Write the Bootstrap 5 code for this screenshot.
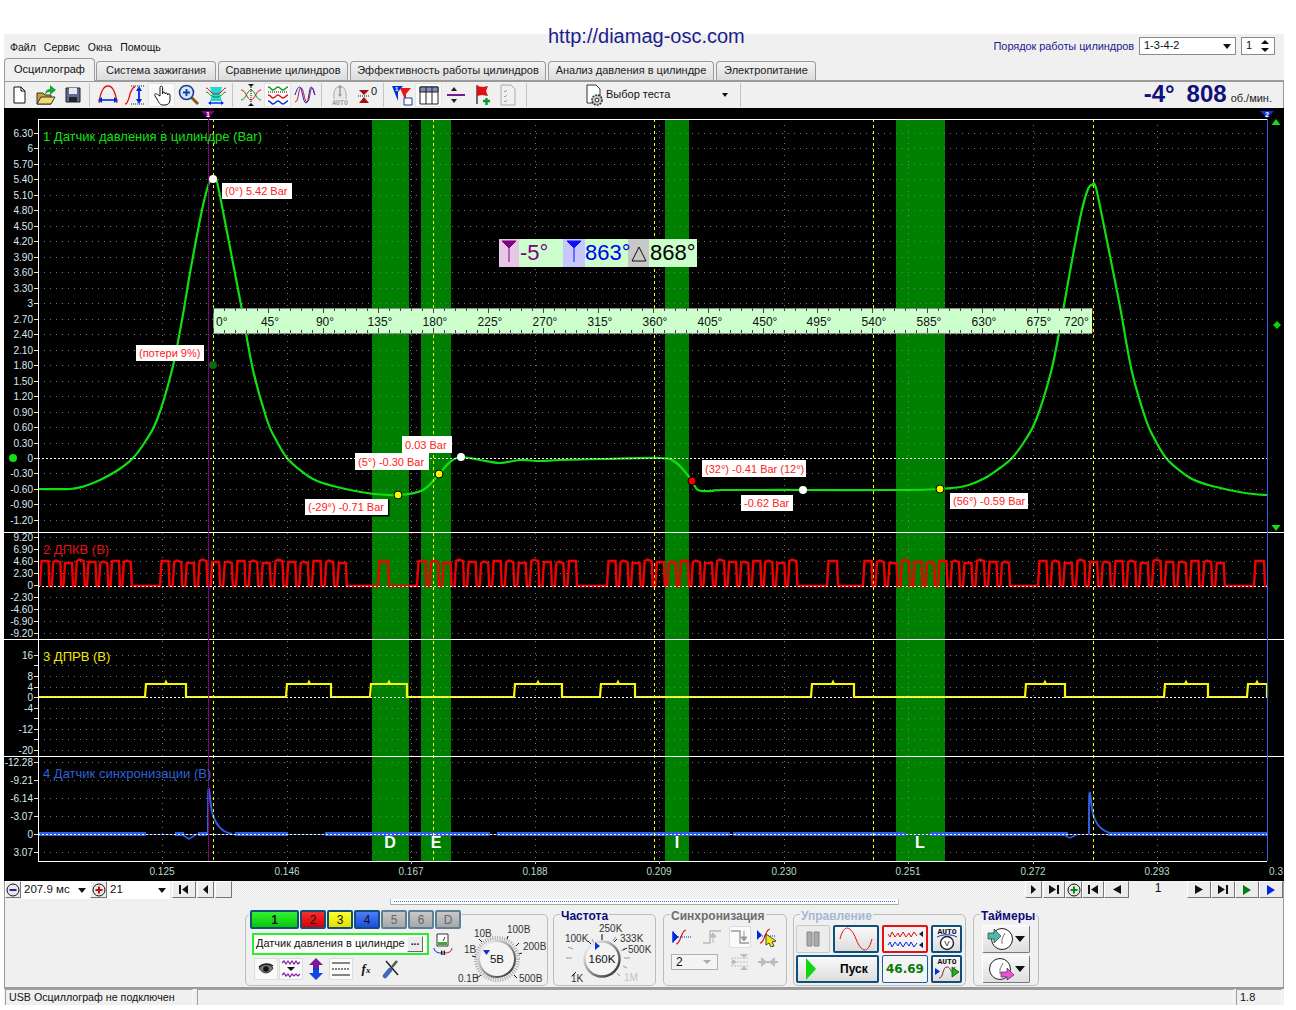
<!DOCTYPE html>
<html lang="ru">
<head>
  <meta charset="UTF-8" />
  <title>Осциллограф</title>
  <link href="https://cdn.jsdelivr.net/npm/bootstrap@5.3.0/dist/css/bootstrap.min.css" rel="stylesheet" />
  <style>
    body { margin: 0; padding-top: 34px; background: #fff; font-family: "Liberation Sans", Arial, sans-serif; font-size: 11px; color: #111; line-height: 1.2; }
    .site-url { position: absolute; left: 548px; top: 24px; font-size: 20px; color: #1c1c8e; line-height: 24px; }
    .app { width: 1280px; margin-left: 4px; background: #f0f0f0; height: 971px; }
    .menu-row { height: 24px; padding: 7px 0 0 6px; }
    .menu-row span.mi { margin-right: 8px; font-size: 10.5px; }
    .order-lbl { color: #1c1c8e; margin-right: 5px; letter-spacing: -.08px; margin-top: -1px; }
    .cmb { background: #fff; border: 1px solid #8a8a8a; height: 18px; display: flex; align-items: center; justify-content: space-between; padding: 0 4px; color: #111; margin-top: -4px; }
    .cmb i { width: 0; height: 0; border: 4px solid transparent; border-top: 5px solid #111; border-bottom: 0; }
    .order-cmb { width: 97px; }
    .spin { width: 34px; margin-left: 5px; margin-right: 9px; }
    .spin b { font-weight: 400; }
    .spin svg { display: block; }
    .tabs-row { height: 22px; padding-left: 0; border-bottom: 0; gap: 2px; flex-wrap: nowrap; }
    .tabs-row .nav-link { height: 19px; margin-top: 3px; padding: 2px 0 0; text-align: center; font-size: 11px; line-height: 13px; color: #222; border: 1px solid #9a9a9a; border-bottom: 0; border-radius: 4px 4px 0 0; background: linear-gradient(#f4f4f4, #dcdcdc); white-space: nowrap; }
    .tabs-row .nav-link.active { height: 23px; margin-top: 0; padding: 4px 0 0; margin-bottom: -1px; background: #f0f0f0; border-color: #9a9a9a; color: #111; position: relative; z-index: 2; }
    .tabs-row .nav-item:nth-child(1) { width: 91px; margin-right: -1px; }
    .tabs-row .nav-item:nth-child(2) { width: 120px; }
    .tabs-row .nav-item:nth-child(3) { width: 130px; }
    .tabs-row .nav-item:nth-child(4) { width: 196px; }
    .tabs-row .nav-item:nth-child(5) { width: 166px; }
    .tabs-row .nav-item:nth-child(6) { width: 100px; }
    .tool-row { height: 28px; border: 1px solid #9a9a9a; border-bottom: 0; border-top-width: 2px; padding-left: 0; margin-bottom: 0; align-items: center; }
    .tbtn { width: 27px; height: 24px; display: flex; align-items: center; justify-content: center; flex: none; }
    .tbtn.on { background: #fafafa; box-shadow: inset 0 0 0 1px #e4e4e4; }
    .tsep { width: 1px; height: 24px; background: #c4c4c4; margin: 0 4px 0 3px; flex: none; }
    .test-pick { width: 206px; height: 24px; display: flex; align-items: center; padding-left: 51px; flex: none; position: relative; }
    .test-pick i { position: absolute; right: 9px; top: 10px; border: 3px solid transparent; border-top: 4px solid #111; border-bottom: 0; }
    .rpm { margin-left: auto; color: #10107c; font-weight: 700; font-size: 24px; line-height: 26px; padding: 2px 11px 0 0; white-space: nowrap; display: flex; align-items: baseline; }
    .rpm small { font-size: 11px; font-weight: 400; color: #222; margin-left: 4px; }
    .rpm span { margin-right: 12px; }
    .scope-svg { display: block; background: #000; width: 1280px; height: 773px; font-family: "Liberation Sans", Arial, sans-serif; }
    .scroll-row { height: 18px; border-left: 1px solid #9a9a9a; border-right: 1px solid #9a9a9a; background: #f0f0f0; }
    .sbtn { height: 17px; flex: none; display: flex; align-items: center; justify-content: center; background: #ececec; border: 1px solid; border-color: #fff #777 #777 #fff; padding: 0; }
    .sfld { background: #fff; height: 18px; display: flex; align-items: center; justify-content: space-between; padding: 0 4px 0 3px; font-size: 11.5px; flex: none; }
    .sfld i { width: 0; height: 0; border: 4px solid transparent; border-top: 5px solid #111; border-bottom: 0; }
    .track { flex: 1; height: 17px; background: repeating-conic-gradient(#e6e6e6 0 25%, #fafafa 0 50%) 0 0 / 2px 2px; }
    .pageno { width: 58px; text-align: center; font-size: 12px; flex: none; }
    .slide-bar { margin: 0 0 5px 385px; width: 509px; height: 6px; background: #fff; border: 1px solid #bbb; border-top: 0; border-bottom: 1px solid #aaa; position: relative; }
    .slide-bar::before { content: ""; position: absolute; left: 3px; right: 3px; top: 2px; border-top: 1px dotted #3a6fd8; }
    .lower { height: 90px; border-left: 1px solid #9a9a9a; border-right: 1px solid #9a9a9a; border-bottom: 2px solid #9a9a9a; }
    .grp-row { padding-left: 240px; }
    .grp-box { height: 76px; border: 1px solid #bdbdbd; border-radius: 5px; padding: 4px 0 0 0; margin: 0; min-width: 0; flex: none; position: relative; }
    .grp-box legend { float: none; width: auto; height: 8px; line-height: 12px; margin: 0 0 0 6px; padding: 0 1px; font-size: 12px; font-weight: 700; white-space: nowrap; }
    .grp-chan { width: 303px; }
    .grp-chan legend { display: flex; gap: 1px; margin-left: 3px; }
    .grp-freq { width: 103px; margin-left: 5px; }
    .grp-sync { width: 124px; margin-left: 7px; }
    .grp-ctl { width: 173px; margin-left: 6px; }
    .grp-tim { width: 66px; margin-left: 7px; }
    .ttl-navy { color: #0c0c78; }
    .ttl-gray { color: #6e6e6e; }
    .ttl-pale { color: #a4b8d0; }
    .chan { height: 19px; padding: 0; border-radius: 2px; border: 2px solid #0f4f7c; font-size: 12px; line-height: 14px; color: #111; }
    .chan.g1 { background: linear-gradient(#35f035, #06c806); width: 49px; font-weight: 700; }
    .chan.g2 { background: linear-gradient(#f53030, #d80000); width: 26px; }
    .chan.g3 { background: linear-gradient(#ffff30, #e0e000); width: 26px; }
    .chan.g4 { background: linear-gradient(#4f7cf8, #1c4ee0); width: 26px; }
    .chan.g5 { background: linear-gradient(#c8c8c8, #a8a8a8); width: 26px; color: #666; border-color: #5e7e94; }
    .chan-left { width: 208px; padding: 11px 0 0 6px; }
    .name-fld { width: 177px; height: 22px; border: 2px solid #2bee2b; background: #fff; font-size: 11px; display: flex; align-items: center; justify-content: space-between; padding-left: 2px; white-space: nowrap; }
    .dots-btn { width: 16px; height: 16px; background: #ececec; border: 1px solid; border-color: #fff #666 #666 #fff; font-size: 10px; line-height: 10px; text-align: center; font-weight: 700; }
    .ibtn-row { gap: 1px; margin: 3px 0 0 2px; }
    .ibtn { width: 24px; height: 22px; display: flex; align-items: center; justify-content: center; flex: none; }
    .ibtn.on { background: #fafafa; box-shadow: inset 0 0 0 1px #ddd; }
    .fx-lbl { font-family: "Liberation Serif", serif; font-style: italic; font-weight: 700; font-size: 13px; }
    .fx-lbl small { font-size: 9px; }
    .sync-a { gap: 5px; padding: 4px 0 0 7px; }
    .sync-b { gap: 8px; padding: 5px 0 0 7px; }
    .sync-off { box-shadow: none; background: #fafafa; width: 22px; }
    .ctl-row { gap: 3px; padding: 3px 0 0 2px; }
    .ctl-row + .ctl-row { padding-top: 2px; }
    .ctl { border: 2px solid #0f4f7c; border-radius: 2px; background: linear-gradient(#fafafa, #dcdcdc); display: flex; align-items: center; justify-content: center; height: 28px; flex: none; padding: 0; }
    .ctl.pale { border-color: #c8c8c8; background: #ececec; border-width: 1px; width: 34px; }
    .ctl.wide { width: 46px; }
    .ctl.narrow { width: 31px; }
    .ctl.go { width: 83px; justify-content: flex-start; }
    .ctl.red { border-color: #e81010; background: #f4f4f4; }
    .ctl.flat { background: #f4f4f4; border-color: #1a5ea0; border-width: 1px; color: #0a7a0a; font-weight: 700; font-size: 12px; font-family: "DejaVu Sans", sans-serif; }
    .ctl.timer { border: 1px solid; border-color: #fff #777 #777 #fff; background: linear-gradient(#f8f8f8, #dedede); width: 48px; justify-content: space-between; padding: 0 4px 0 4px; }
    .tim-col { gap: 2px; padding-top: 3px; }
    .go-lbl { font-weight: 700; font-size: 12px; margin-left: 24px; }
    .sync-cmb { width: 47px; height: 16px; background: #f4f4f4; border: 1px solid #b0b0b0; display: flex; align-items: center; justify-content: space-between; padding: 0 6px 0 4px; font-size: 12px; }
    .sync-cmb i { border: 4px solid transparent; border-top: 4px solid #aaa; border-bottom: 0; }
    .status-row { height: 17px; padding-left: 1px; }
    .st-cell { border: 1px solid; border-color: #a0a0a0 #f8f8f8 #f8f8f8 #a0a0a0; height: 17px; padding: 1px 0 0 3px; background: #f0f0f0; }
    .st-a { width: 188px; font-size: 10.7px; }
    .st-b { width: 1037px; margin-left: 4px; }
    .st-c { width: 46px; margin-left: 2px; }
    .knob-lbl { font-size: 10px; fill: #333; font-family: "Liberation Sans", Arial, sans-serif; }
    .knob-val { font-size: 11.5px; fill: #111; font-family: "Liberation Sans", Arial, sans-serif; }
    .sb-16 { width: 16px; } .sb-17 { width: 17px; } .sb-22 { width: 22px; } .sb-24 { width: 24px; } .sb-25 { width: 25px; }
    .sf-69 { width: 69px; } .sf-63 { width: 63px; margin-right: 2px; }
    .ml-1px { margin-left: 1px; }
  </style>
</head>
<body>
  <div class="site-url">http://diamag-osc.com</div>

  <div class="app">
    <!-- menu -->
    <div class="menu-row d-flex align-items-start">
      <span class="mi">Файл</span><span class="mi">Сервис</span><span class="mi">Окна</span><span class="mi">Помощь</span>
      <span class="order-lbl ms-auto">Порядок работы цилиндров</span>
      <div class="cmb order-cmb"><span>1-3-4-2</span><i></i></div>
      <div class="cmb spin"><b>1</b>
        <svg width="10" height="14" viewBox="0 0 10 14"><path d="M5 1 9 5H1zM5 13 9 9H1z" fill="#111"/></svg>
      </div>
    </div>

    <!-- tabs -->
    <ul class="nav nav-tabs tabs-row">
      <li class="nav-item"><a class="nav-link active" href="#">Осциллограф</a></li>
      <li class="nav-item"><a class="nav-link" href="#">Система зажигания</a></li>
      <li class="nav-item"><a class="nav-link" href="#">Сравнение цилиндров</a></li>
      <li class="nav-item"><a class="nav-link" href="#">Эффективность работы цилиндров</a></li>
      <li class="nav-item"><a class="nav-link" href="#">Анализ давления в цилиндре</a></li>
      <li class="nav-item"><a class="nav-link" href="#">Электропитание</a></li>
    </ul>

    <!-- toolbar -->
    <div class="tool-row d-flex">
      <div class="tbtn"><svg width="22" height="22" viewBox="0 0 22 22"><path d="M6 3h7l4 4v12H6z" fill="#fff" stroke="#111"/><path d="M13 3v4h4" fill="none" stroke="#111"/></svg></div>
      <div class="tbtn"><svg width="24" height="24" viewBox="0 0 24 24"><path d="M3 10h6l2 2h6v9H3z" fill="#c9a23a" stroke="#333"/><path d="M3 21l4-7h14l-4 7z" fill="#f4d870" stroke="#333"/><path d="M16 2l6 5-6 5V9c-3 0-4 1-5 3 0-4 2-6 5-6z" fill="#18a838"/></svg></div>
      <div class="tbtn"><svg width="20" height="20" viewBox="0 0 20 20"><path d="M3 3h14v14H3z" fill="#5a6a9a" stroke="#222"/><path d="M6 3h8v6H6z" fill="#e8e8e8"/><path d="M6 12h8v5H6z" fill="#222"/></svg></div>
      <div class="tsep"></div>
      <div class="tbtn"><svg width="24" height="24" viewBox="0 0 24 24"><path d="M3 20C5 5 9 3 12 3s7 2 9 17" fill="none" stroke="#e01010" stroke-width="1.300"/><path d="M4 17h16" stroke="#0028e0" stroke-width="1.600"/><path d="M2 17l4-3v6zM22 17l-4-3v6z" fill="#0028e0"/></svg></div>
      <div class="tbtn"><svg width="24" height="24" viewBox="0 0 24 24"><path d="M2 21c5 0 4-17 10-17" fill="none" stroke="#e01010" stroke-width="1.300"/><path d="M8 3h14M8 21h14" stroke="#222" stroke-dasharray="1 1"/><path d="M16 5v14" stroke="#0028e0" stroke-width="1.800"/><path d="M16 3l-3 5h6zM16 21l-3-5h6z" fill="#0028e0"/></svg></div>
      <div class="tbtn on"><svg width="22" height="24" viewBox="0 0 22 24"><path d="M9 13V4.500a1.300 1.300 0 0 1 2.600 0V11v-1a1.300 1.300 0 0 1 2.500 0v1a1.300 1.300 0 0 1 2.500 0v1a1.200 1.200 0 0 1 2.400 0v5c0 3-2 5-5 5h-2c-3 0-4-2-6-6l-2-3c-1-2 1-3 2.500-1.500z" fill="#fff" stroke="#111"/></svg></div>
      <div class="tbtn"><svg width="24" height="24" viewBox="0 0 24 24"><path d="M14 14l7 7" stroke="#8a5a18" stroke-width="3"/><circle cx="9.500" cy="9.500" r="7" fill="#cfe6fa" stroke="#223a88" stroke-width="1.600"/><path d="M6 9.500h7M9.500 6v7" stroke="#1c3aa0" stroke-width="1.800"/></svg></div>
      <div class="tbtn"><svg width="24" height="24" viewBox="0 0 24 24"><path d="M6 4h12l-2 8 2 6H6l2-6z" fill="#1fd8d8"/><path d="M2 5c3 0 4 6 10 6s7-6 10-6" fill="none" stroke="#e01010"/><path d="M2 9c3 0 4 5 10 5s7-5 10-5" fill="none" stroke="#0a9a0a"/><path d="M6 20h12" stroke="#0028e0" stroke-width="1.400"/><path d="M4 20l3-2v4zM20 20l-3-2v4z" fill="#0028e0"/></svg></div>
      <div class="tsep"></div>
      <div class="tbtn"><svg width="24" height="24" viewBox="0 0 24 24"><path d="M2 7c5 0 6 10 10 10s5-10 10-10" fill="none" stroke="#e01010"/><path d="M2 17c5 0 6-10 10-10s5 10 10 10" fill="none" stroke="#0a9a0a"/><path d="M12 4l-3-3h6zM12 20l-3 3h6z" fill="#111"/><path d="M12 4v16" stroke="#111" stroke-dasharray="1 1"/></svg></div>
      <div class="tbtn on"><svg width="24" height="24" viewBox="0 0 24 24"><path d="M2 4c3 0 3 3 5 3s3-3 5-3 3 3 5 3 3-3 5-3" fill="none" stroke="#0a9a0a" stroke-width="1.300"/><path d="M2 12c3 0 3 3 5 3s3-3 5-3 3 3 5 3 3-3 5-3" fill="none" stroke="#e01010" stroke-width="1.300"/><path d="M2 18c3 0 3 3 5 3s3-3 5-3 3 3 5 3 3-3 5-3" fill="none" stroke="#0028e0" stroke-width="1.300"/><path d="M2 9h20" stroke="#111" stroke-dasharray="1 1"/></svg></div>
      <div class="tbtn"><svg width="24" height="24" viewBox="0 0 24 24"><path d="M2 19C6 19 5 5 8 5s3 14 6 14 3-14 5-14 2 5 3 7" fill="none" stroke="#e01010"/><path d="M2 12c2-6 3-8 5-8s3 16 6 16 3-16 5-16 2 4 4 8" fill="none" stroke="#0028e0"/></svg></div>
      <div class="tsep"></div>
      <div class="tbtn"><svg width="24" height="24" viewBox="0 0 24 24"><path d="M6 16C5 8 8 3 12 3s7 5 6 13" fill="#e8e8e8" stroke="#aaa"/><path d="M12 4v9" stroke="#999" stroke-width="1.400"/><path d="M12 2l-2 3h4zM12 14l-2-3h4z" fill="#999"/><text x="12" y="22" text-anchor="middle" font-size="6.500" font-weight="700" fill="#999" font-family="Liberation Mono">AUTO</text></svg></div>
      <div class="tbtn"><svg width="24" height="24" viewBox="0 0 24 24"><path d="M3 13h12" stroke="#111" stroke-dasharray="1 1"/><path d="M9 12l-5-5h10zM9 14l-5 6h10z" fill="#a01010"/><text x="19" y="12" text-anchor="middle" font-size="11" fill="#111" font-family="Liberation Sans">0</text></svg></div>
      <div class="tsep"></div>
      <div class="tbtn"><svg width="24" height="24" viewBox="0 0 24 24"><path d="M2 3h11l-5 6v9z" fill="#0030d8"/><path d="M10 5h11l-5 6v8z" fill="#e81818"/><path d="M14 15h8v7h-8z" fill="#fff" stroke="#103a9a"/><text x="5" y="8" font-size="6" font-weight="700" fill="#fff" font-family="Liberation Sans">1</text></svg></div>
      <div class="tbtn on"><svg width="22" height="22" viewBox="0 0 22 22"><path d="M2 3h18v17H2z" fill="#fff" stroke="#222"/><path d="M2 3h18v5H2z" fill="#7d8fb8" stroke="#222"/><path d="M8 3v17M14 3v17" stroke="#222"/></svg></div>
      <div class="tbtn"><svg width="24" height="24" viewBox="0 0 24 24"><path d="M3 12h18" stroke="#7a1a90" stroke-width="2"/><path d="M10 4l-3 4h6zM10 20l-3-4h6z" fill="#222"/></svg></div>
      <div class="tbtn"><svg width="22" height="24" viewBox="0 0 22 24"><path d="M5 2v19" stroke="#333" stroke-width="1.400"/><path d="M5 3l6 1 5-1-2 5 2 5-6-1-5 1z" fill="#e01010"/><path d="M11 18h7M14.500 15v7" stroke="#0a9a2a" stroke-width="2.400"/></svg></div>
      <div class="tbtn"><svg width="20" height="22" viewBox="0 0 20 22"><path d="M1 1h10l4 4v16H1z" fill="#f0f0f0" stroke="#aaa"/><path d="M4 7l1 1 2-2M4 12l1 1 2-2M4 17l1 1 2-2" fill="none" stroke="#a0a0a0"/></svg></div>
      <div class="tsep"></div>
      <div class="test-pick">
        <svg width="24" height="24" viewBox="0 0 24 24"><path d="M5 2h9l4 4v14H5z" fill="#fff" stroke="#333"/><circle cx="15" cy="17" r="5" fill="#c8c8c8" stroke="#333" stroke-dasharray="2 1" stroke-width="1.600"/><circle cx="15" cy="17" r="1.800" fill="#fff" stroke="#333"/></svg>
        <span>Выбор теста</span><i></i>
      </div>
      <div class="tsep"></div>
      <div class="rpm"><span>-4°</span>808<small>об./мин.</small></div>
    </div>

    <svg id="scope" class="scope-svg" viewBox="0 0 1280 773"></svg>

    <!-- scroll row -->
    <div class="scroll-row d-flex">
      <button class="sbtn sb-16"><svg width="14" height="14" viewBox="0 0 14 14"><circle cx="7" cy="7" r="6" fill="#e8e8e8" stroke="#111"/><path d="M3.500 7h7" stroke="#1a2a9a" stroke-width="2"/></svg></button>
      <div class="sfld sf-69"><span>207.9 мс</span><i></i></div>
      <button class="sbtn sb-17"><svg width="14" height="14" viewBox="0 0 14 14"><circle cx="7" cy="7" r="6" fill="#e8e8e8" stroke="#111"/><path d="M3.500 7h7M7 3.500v7" stroke="#c01010" stroke-width="2"/></svg></button>
      <div class="sfld sf-63"><span>21</span><i></i></div>
      <button class="sbtn sb-24"><svg width="10" height="9" viewBox="0 0 10 9"><path d="M0 0h2v9H0zM9 0v9L3 4.500z" fill="#111"/></svg></button>
      <button class="sbtn sb-17 ml-1px"><svg width="5" height="9" viewBox="0 0 5 9"><path d="M5 0v9L0 4.500z" fill="#111"/></svg></button>
      <button class="sbtn sb-17 ml-1px"></button>
      <div class="track"></div>
      <button class="sbtn sb-17"><svg width="5" height="9" viewBox="0 0 5 9"><path d="M0 0v9l5-4.500z" fill="#111"/></svg></button>
      <button class="sbtn sb-22 ml-1px"><svg width="10" height="9" viewBox="0 0 10 9"><path d="M0 0v9l7-4.500zM8 0h2v9H8z" fill="#111"/></svg></button>
      <button class="sbtn sb-17"><svg width="14" height="14" viewBox="0 0 14 14"><circle cx="7" cy="7" r="6" fill="#e8e8e8" stroke="#111"/><path d="M3.500 7h7M7 3.500v7" stroke="#0a8a1a" stroke-width="2"/></svg></button>
      <button class="sbtn sb-22"><svg width="10" height="9" viewBox="0 0 10 9"><path d="M0 0h2v9H0zM10 0v9L3 4.500z" fill="#111"/></svg></button>
      <button class="sbtn sb-25"><svg width="8" height="9" viewBox="0 0 8 9"><path d="M8 0v9L0 4.500z" fill="#111"/></svg></button>
      <div class="pageno">1</div>
      <button class="sbtn sb-24"><svg width="8" height="9" viewBox="0 0 8 9"><path d="M0 0v9l8-4.500z" fill="#111"/></svg></button>
      <button class="sbtn sb-24"><svg width="10" height="9" viewBox="0 0 10 9"><path d="M0 0v9l7-4.500zM8 0h2v9H8z" fill="#111"/></svg></button>
      <button class="sbtn sb-24"><svg width="8" height="10" viewBox="0 0 8 10"><path d="M0 0v10l8-5z" fill="#0a7a0a"/></svg></button>
      <button class="sbtn sb-24"><svg width="8" height="10" viewBox="0 0 8 10"><path d="M0 0v10l8-5z" fill="#0028e0"/></svg></button>
    </div>

    <!-- lower control panel -->
    <div class="lower">
      <div class="slide-bar"></div>
      <div class="d-flex grp-row">

        <fieldset class="grp-box grp-chan">
          <legend>
            <button class="chan g1">1</button><button class="chan g2">2</button><button class="chan g3">3</button><button class="chan g4">4</button><button class="chan g5">5</button><button class="chan g5">6</button><button class="chan g5">D</button>
          </legend>
          <div class="d-flex">
            <div class="chan-left">
              <div class="d-flex align-items-center">
                <div class="name-fld"><span>Датчик давления в цилиндре</span><div class="dots-btn me-1">...</div></div>
                <svg class="ms-1" width="20" height="22" viewBox="0 0 20 22"><path d="M4 1h11v12H4z" fill="#fff" stroke="#333"/><path d="M5 9h9v3H5z" fill="#38a838"/><path d="M10 8l2-4" stroke="#333"/><path d="M1 15c0 3 3 5 7 5" fill="none" stroke="#0028e0"/><path d="M19 15c0 3-3 5-7 5" fill="none" stroke="#e01010"/><path d="M8 17v6l3-3zM12 17v6l-3-3z" fill="#222"/></svg>
              </div>
              <div class="d-flex ibtn-row">
                <div class="ibtn on"><svg width="16" height="12" viewBox="0 0 16 12"><path d="M1 5c3-4 10-5 14 0-3 6-10 7-14 0z" fill="#777" stroke="#333"/><circle cx="8" cy="6" r="2.800" fill="#111"/><path d="M1 4c4-4 10-4 14-1" fill="none" stroke="#111" stroke-width="1.400"/></svg></div>
                <div class="ibtn on"><svg width="20" height="22" viewBox="0 0 20 22"><path d="M1 5l2-2 2 3 2-3 2 3 2-3 2 3 2-3 2 3 2-2M1 17l2-2 2 3 2-2 2 3 2-3 2 2 2-2 2 2 2-2" fill="none" stroke="#8a1aa0" stroke-width="1.200"/><path d="M6 9h8l-4 4z" fill="#111"/></svg></div>
                <div class="ibtn"><svg width="18" height="24" viewBox="0 0 18 24"><path d="M9 1 2 8h4v5h6V8h4z" fill="#7a1a9a"/><path d="M9 23l7-7h-4v-5H6v5H2z" fill="#0a3ae0" opacity=".95"/></svg></div>
                <div class="ibtn on"><svg width="20" height="18" viewBox="0 0 20 18"><path d="M1 3h18M1 15h18" stroke="#111"/><path d="M1 9h18" stroke="#111" stroke-dasharray="2 1"/></svg></div>
                <div class="ibtn"><span class="fx-lbl">f<small>x</small></span></div>
                <div class="ibtn"><svg width="18" height="20" viewBox="0 0 18 20"><path d="M3 17l5-6" stroke="#3a6ab8" stroke-width="4.500" stroke-linecap="round"/><path d="M4 2l12 14" stroke="#222" stroke-width="1.500"/><path d="M15 2l-5 6" stroke="#555" stroke-width="2.500"/></svg></div>
              </div>
            </div>
            <svg width="92" height="64" viewBox="454 921 92 64">
              <defs>
                <linearGradient id="ringV" x1="0" y1="0" x2="1" y2="1"><stop offset=".1" stop-color="#f2f2f2"/><stop offset="1" stop-color="#222"/></linearGradient>
                <linearGradient id="ringF" x1="0" y1="0" x2="1" y2="1"><stop offset=".1" stop-color="#f2f2f2"/><stop offset="1" stop-color="#222"/></linearGradient>
              </defs>
              <circle cx="497" cy="958" r="21" fill="none" stroke="#aaa" stroke-width="4" stroke-dasharray="1 1.400"/>
              <circle cx="497" cy="958" r="18" fill="#f4f4f4" stroke="url(#ringV)" stroke-width="2"/>
              <path d="M481 974l-4 3M482 941l-3-3M507 938l1-3M516 945l3-3M519 953l3-1M514 974l3 3M472 955l4 1" stroke="#111"/>
              <path d="M483 949h7l-3.500 5z" fill="#1030d8"/>
              <text class="knob-val" x="497" y="962" text-anchor="middle">5В</text>
              <text class="knob-lbl" x="474" y="936">10В</text>
              <text class="knob-lbl" x="507" y="932">100В</text>
              <text class="knob-lbl" x="523" y="949">200В</text>
              <text class="knob-lbl" x="464" y="952">1В</text>
              <text class="knob-lbl" x="458" y="981">0.1В</text>
              <text class="knob-lbl" x="519" y="981">500В</text>
            </svg>
          </div>
        </fieldset>

        <fieldset class="grp-box grp-freq">
          <legend class="ttl-navy">Частота</legend>
          <svg width="101" height="64" viewBox="554 921 101 64" class="d-block">
            <path d="M566 957h6M568 946l5 2M571 976l4-3M592 938l2 4M602 934v5M616 936l-3 4M625 947l-4 3M630 957h-6M627 967l-4-2M620 975l-3-3" stroke="#999"/>
            <path d="M572 975l4-4M588 940l3 3M602 933v6M617 938l-3 3M627 947l-4 2" stroke="#222"/>
            <circle cx="602" cy="958" r="17.500" fill="#f4f4f4" stroke="url(#ringF)" stroke-width="2.400"/>
            <path d="M595 941v8l5-4z" fill="#1030d8"/>
            <text class="knob-val" x="602" y="962" text-anchor="middle">160K</text>
            <text class="knob-lbl" x="599" y="931">250K</text>
            <text class="knob-lbl" x="565" y="941">100K</text>
            <text class="knob-lbl" x="620" y="941">333K</text>
            <text class="knob-lbl" x="628" y="952">500K</text>
            <text class="knob-lbl" x="571" y="981">1K</text>
            <text class="knob-lbl" x="624" y="980" style="fill:#c4c4c4">1M</text>
          </svg>
        </fieldset>

        <fieldset class="grp-box grp-sync">
          <legend class="ttl-gray">Синхронизация</legend>
          <div class="d-flex align-items-center sync-a">
            <div class="ibtn"><svg width="22" height="18" viewBox="0 0 22 18"><path d="M4 16c5 0 5-14 10-14" fill="none" stroke="#e01010" stroke-width="1.200"/><path d="M4 9h16" stroke="#0028e0" stroke-dasharray="1 1"/><path d="M1 3v12M1 4l5 5-5 5z" fill="#0028e0" stroke="#0028e0"/></svg></div>
            <div class="ibtn"><svg width="20" height="16" viewBox="0 0 20 16"><path d="M1 14h7V2h11" fill="none" stroke="#b8b8b8" stroke-width="1.400"/><path d="M11 14V6M11 4l-3 4h6z" stroke="#b8b8b8" fill="#b8b8b8"/></svg></div>
            <div class="ibtn on sync-off"><svg width="20" height="16" viewBox="0 0 20 16"><path d="M1 2h9v12h9" fill="none" stroke="#999" stroke-width="1.400"/><path d="M14 2v8M14 12l-3-4h6z" stroke="#999" fill="#999"/></svg></div>
            <div class="ibtn"><svg width="24" height="20" viewBox="0 0 24 20"><path d="M4 16c5 0 5-14 10-14" fill="none" stroke="#e01010" stroke-width="1.200"/><path d="M4 9h16" stroke="#0028e0" stroke-dasharray="1 1"/><path d="M1 3v10l5-5z" fill="#0028e0"/><path d="M10 7l10 7-4 1 2 4-3 1-2-4-3 2z" fill="#f4e410" stroke="#222" stroke-width=".8"/></svg></div>
          </div>
          <div class="d-flex align-items-center sync-b">
            <div class="sync-cmb"><span>2</span><i></i></div>
            <svg class="ms-1" width="20" height="18" viewBox="0 0 20 18"><path d="M2 6v6l5-3z" fill="#bbb"/><path d="M1 5h18M1 13h18M1 9h18" stroke="#bbb" stroke-dasharray="2 1"/><path d="M14 5l-4-4h8zM14 13l-4 4h8z" fill="#bbb"/></svg>
            <svg width="20" height="12" viewBox="0 0 20 12"><path d="M0 6h20" stroke="#bbb" stroke-width="2"/><path d="M3 1l6 5-6 5zM17 1l-6 5 6 5z" fill="#bbb"/></svg>
          </div>
        </fieldset>

        <fieldset class="grp-box grp-ctl">
          <legend class="ttl-pale">Управление</legend>
          <div class="d-flex ctl-row">
            <button class="ctl pale"><svg width="14" height="16" viewBox="0 0 14 16"><path d="M1 1h5v14H1zM8 1h5v14H8z" fill="#aaa" stroke="#888"/></svg></button>
            <button class="ctl wide"><svg width="34" height="24" viewBox="0 0 34 24"><path d="M1 12C5-4 12-1 17 12s12 16 16 0" fill="none" stroke="#e01010"/></svg></button>
            <button class="ctl wide red"><svg width="38" height="24" viewBox="0 0 38 24"><path d="M2 7l2 3 2-5 3 5 3-4 2 4 3-5 3 5 3-4 2 4 3-5 3 4" fill="none" stroke="#e01010"/><path d="M2 18l2-3 2 5 3-5 3 4 2-4 3 5 3-5 3 4 2-4 3 5 3-4" fill="none" stroke="#0028e0"/><path d="M37 4v6l-4-3zM37 15v6l-4-3z" fill="#123"/></svg></button>
            <button class="ctl narrow"><svg width="26" height="24" viewBox="0 0 26 24"><text x="13" y="7" text-anchor="middle" font-size="8" font-weight="700" fill="#111" font-family="Liberation Mono">AUTO</text><path d="M3 10c6-3 14-3 20 0" fill="none" stroke="#0028e0"/><circle cx="13" cy="16" r="6.500" fill="#fff" stroke="#222" stroke-width="1.400"/><text x="13" y="19" text-anchor="middle" font-size="8" fill="#111" font-family="Liberation Sans">V</text></svg></button>
          </div>
          <div class="d-flex ctl-row">
            <button class="ctl go"><svg class="ms-2" width="10" height="22" viewBox="0 0 10 22"><path d="M0 0v22l10-11z" fill="#10d810"/></svg><span class="go-lbl">Пуск</span></button>
            <button class="ctl wide flat">46.69</button>
            <button class="ctl narrow"><svg width="26" height="24" viewBox="0 0 26 24"><text x="13" y="7" text-anchor="middle" font-size="8" font-weight="700" fill="#111" font-family="Liberation Mono">AUTO</text><path d="M5 21c5 0 3-11 8-11s3 11 8 0" fill="none" stroke="#8a1a1a"/><path d="M1 11v7l5-3.500z" fill="#0028e0"/><path d="M18 10v10l7-5z" fill="#10c010" stroke="#111" stroke-width=".6"/></svg></button>
          </div>
        </fieldset>

        <fieldset class="grp-box grp-tim">
          <legend class="ttl-navy">Таймеры</legend>
          <div class="d-flex flex-column align-items-center tim-col">
            <button class="ctl timer"><svg width="28" height="24" viewBox="0 0 28 24"><circle cx="15" cy="12" r="10.500" fill="#fff" stroke="#222"/><path d="M15 12l3-6M15 12v5" stroke="#777"/><path d="M1 6h6V2l7 7-7 7v-4H1z" fill="#50b8a8" stroke="#222" stroke-width=".6"/></svg><svg width="10" height="6" viewBox="0 0 10 6"><path d="M0 0h10L5 6z" fill="#111"/></svg></button>
            <button class="ctl timer"><svg width="28" height="24" viewBox="0 0 28 24"><circle cx="13" cy="12" r="10.500" fill="#fff" stroke="#222"/><path d="M13 12l3-6M13 12v5" stroke="#777"/><path d="M14 15h6v-4l7 7-7 5v-3h-6z" fill="#f050d8" stroke="#222" stroke-width=".6"/></svg><svg width="10" height="6" viewBox="0 0 10 6"><path d="M0 0h10L5 6z" fill="#111"/></svg></button>
          </div>
        </fieldset>
      </div>
    </div>

    <!-- status bar -->
    <div class="status-row d-flex">
      <div class="st-cell st-a">USB Осциллограф не подключен</div>
      <div class="st-cell st-b"></div>
      <div class="st-cell st-c">1.8</div>
    </div>
  </div>

<script>
  // everything in the scope is written in page coordinates, then shifted by (-4, -108)
  const parts = [];

  function txt(x, y, s, o = {}) {
    const a = o.anchor ? ` text-anchor="${o.anchor}"` : "";
    const b = o.bold ? ' font-weight="700"' : "";
    parts.push(`<text x="${x}" y="${y}" font-size="${o.size || 10}" fill="${o.fill || "#fff"}"${a}${b}>${s}</text>`);
  }
  function line(x1, y1, x2, y2, stroke, extra = "") {
    parts.push(`<path d="M${x1} ${y1}L${x2} ${y2}" stroke="${stroke}" shape-rendering="crispEdges" fill="none" ${extra}/>`);
  }
  function rect(x, y, w, h, fill, extra = "") {
    parts.push(`<rect x="${x}" y="${y}" width="${w}" height="${h}" fill="${fill}" ${extra}/>`);
  }
  function smooth(p) {
    let d = `M${p[0][0]} ${p[0][1]}`;
    for (let i = 0; i < p.length - 1; i++) {
      const a = p[Math.max(i - 1, 0)], b = p[i], c = p[i + 1], e = p[Math.min(i + 2, p.length - 1)];
      d += `C${(b[0] + (c[0] - a[0]) / 6).toFixed(1)} ${(b[1] + (c[1] - a[1]) / 6).toFixed(1)} ${(c[0] - (e[0] - b[0]) / 6).toFixed(1)} ${(c[1] - (e[1] - b[1]) / 6).toFixed(1)} ${c[0]} ${c[1]}`;
    }
    return d;
  }

  const L = 38, R = 1267, T = 119, B = 861;
  const GRID = 'stroke-dasharray="1 5"';

  function axisRow(y, s) {
    if (s !== "0") line(L, y, R, y, "#777", GRID);
    line(34, y, L, y, "#ddd");
    if (s) txt(33, y + 4, s, { anchor: "end", fill: "#dde8ec" });
  }

  // green bands
  [[372, 409], [421, 451], [665, 689], [896, 945]].forEach(b => rect(b[0], T, b[1] - b[0], B - T, "#008000"));

  // vertical grid
  [162, 287, 411, 535, 659, 784, 908, 1033, 1157].forEach(x => line(x, T, x, B, "#777", GRID));

  // axes
  ["6.30", "6", "5.70", "5.40", "5.10", "4.80", "4.50", "4.20", "3.90", "3.60", "3.30", "3", "2.70", "2.40", "2.10", "1.80", "1.50", "1.20", "0.90", "0.60", "0.30", "0", "-0.30", "-0.60", "-0.90", "-1.20"]
    .forEach((s, i) => axisRow(Math.round(132.7 + i * 15.49), s));
  ["9.20", "6.90", "4.60", "2.30", "0", "-2.30", "-4.60", "-6.90", "-9.20"].forEach((s, i) => axisRow(537 + i * 12, s));
  [["16", 655], ["", 665], ["8", 676], ["4", 687], ["0", 697], ["-4", 708], ["", 718], ["-12", 729], ["", 739], ["-20", 750]].forEach(a => axisRow(a[1], a[0]));
  [["-12.28", 762], ["-9.21", 780], ["-6.14", 798], ["-3.07", 816], ["0", 834], ["3.07", 852]].forEach(a => axisRow(a[1], a[0]));

  // pressure trace
  const first = [[38, 489], [70, 489], [85, 486], [100, 480], [118, 470], [133, 458], [145, 442], [157, 420], [172, 370], [182, 320], [190, 273], [202, 210], [209, 183], [213, 179], [217, 182], [227, 232], [233, 263], [242, 310], [253, 370], [267, 420], [275, 438], [287, 458], [300, 470], [313, 479], [333, 486], [367, 493], [398, 495], [423, 490], [439, 474], [450, 462], [461, 457], [480, 460], [500, 463], [520, 460], [540, 461], [560, 460], [600, 459], [660, 458], [675, 462], [686, 473], [692, 481], [698, 490], [712, 491], [722, 490], [803, 490], [900, 490], [940, 489], [965, 486], [985, 478], [1000, 468], [1012, 458], [1024, 442], [1036, 420], [1051, 372], [1061, 322], [1069, 277], [1081, 214], [1088, 189], [1092, 185], [1096, 188], [1106, 236], [1112, 266], [1121, 312], [1132, 372], [1146, 420], [1154, 438], [1166, 458], [1179, 470], [1192, 479], [1212, 486], [1245, 493], [1267, 495]];
  parts.push(`<path d="${smooth(first)}" fill="none" stroke="#10e010" stroke-width="2.200"/>`);

  // crankshaft teeth
  let red = "";
  [[40, 134], [160, 350], [378, 390], [417, 580], [607, 800], [827, 837], [863, 1013], [1038, 1228], [1254, 1266]].forEach(g => {
    const single = g[1] - g[0] < 14;
    const n = single ? 1 : Math.round((g[1] - g[0]) / 12.33);
    for (let i = 0; i < n; i++) {
      const x = g[0] + i * (g[1] - g[0]) / n;
      const w = single ? 10 : 8.5;
      const top = 561 + (i % 3);
      red += (red ? "L" : "M") + `${x.toFixed(1)} 586L${(x + 1.5).toFixed(1)} ${top}L${(x + w / 2).toFixed(1)} ${top - (i % 2) * 1.5}L${(x + w).toFixed(1)} ${top}L${(x + w + 1).toFixed(1)} 586`;
    }
  });
  red += "L1267 586";
  parts.push(`<path d="${red}" fill="none" stroke="#f00000" stroke-width="2.400"/>`);

  // camshaft pulses
  let yel = `M${L} 697`;
  [[145, 186], [286, 331], [370, 407], [514, 562], [600, 635], [811, 854], [1025, 1065], [1164, 1208], [1247, 1267]].forEach(p => {
    const m = Math.round((p[0] + p[1]) / 2);
    yel += `L${p[0]} 697L${p[0] + 1} 684L${m - 1} 684L${m} 682L${m + 1} 684L${p[1]} 684L${p[1]} 697`;
  });
  yel += `L${R} 697`;
  parts.push(`<path d="${yel}" fill="none" stroke="#f8f800" stroke-width="2.200"/>`);

  // sync sensor
  line(L, 834, R, 834, "#3060e0");
  [[38, 146], [175, 184], [198, 207], [235, 288], [325, 490], [497, 730], [733, 905], [930, 1068], [1108, 1267]].forEach(s => {
    rect(s[0], 832, s[1] - s[0], 4, "#3060e0");
  });
  parts.push('<path d="M181 834l8 5 8-5" fill="none" stroke="#3060e0" stroke-width="1.500"/>');
  parts.push(`<path d="${smooth([[208, 834], [208.5, 789], [212, 812], [217, 824], [224, 831], [232, 834]])}" fill="none" stroke="#3060e0" stroke-width="2"/>`);
  parts.push('<path d="M1062 834l8 4 8-4" fill="none" stroke="#3060e0" stroke-width="1.500"/>');
  parts.push(`<path d="${smooth([[1089, 834], [1089.5, 793], [1093, 814], [1098, 825], [1105, 831], [1113, 834]])}" fill="none" stroke="#3060e0" stroke-width="2"/>`);

  // zero levels and 180° marks
  [458, 586, 697, 834].forEach(y => line(L, y, R, y, "#fff", 'stroke-dasharray="2 2"'));
  [213, 433, 654, 873, 1093].forEach(x => line(x, T, x, B, "#ffff00", 'stroke-dasharray="3 3"'));

  // panel frame
  [532, 639, 756].forEach(y => line(L - 38, y, R + 17, y, "#fff"));
  line(L, T, R, T, "#fff");
  line(L, B, R, B, "#fff");
  line(L, T, L, B, "#fff");
  line(R, T, R, B, "#3a5ae8");

  // cursors
  line(208, 112, 208, B, "#800080");
  parts.push('<path d="M201 111h14l-7 7z" fill="#800080"/>');
  txt(208, 117, "1", { anchor: "middle", size: 7, bold: true });
  parts.push('<path d="M1260 111h14l-7 7z" fill="#1030e0"/>');
  txt(1267, 117, "2", { anchor: "middle", size: 7, bold: true });

  // titles
  txt(43, 141, "1 Датчик давления в цилиндре (Bar)", { size: 13, fill: "#10e010" });
  txt(43, 554, "2 ДПКВ (В)", { size: 13, fill: "#e01010" });
  txt(43, 661, "3 ДПРВ (В)", { size: 13, fill: "#f0e800" });
  txt(43, 778, "4 Датчик синхронизации (В)", { size: 13, fill: "#2f62d8" });

  // letters on the bands
  [["D", 390], ["E", 436], ["I", 677], ["L", 920]].forEach(a => txt(a[1], 848, a[0], { anchor: "middle", size: 16, bold: true }));

  // time axis
  [["0.125", 162], ["0.146", 287], ["0.167", 411], ["0.188", 535], ["0.209", 659], ["0.230", 784], ["0.251", 908], ["0.272", 1033], ["0.293", 1157], ["0.3", 1276]].forEach(a => {
    txt(a[1], 875, a[0], { anchor: "middle", fill: "#b8dcc8" });
    if (a[1] < R) line(a[1], B, a[1], B + 3, "#bbb");
  });

  // crank angle ruler
  rect(213, 308, 879, 25, "#ccffcc");
  line(213, 308, 1092, 308, "#8a8a8a");
  line(213, 333, 1092, 333, "#8a8a8a");
  line(213, 308, 213, 333, "#8a8a8a");
  for (let i = 0; i <= 80; i++) {
    const x = Math.round(213 + i * 10.99);
    const big = i % 5 === 0;
    line(x, 308, x, 308 + (big ? 5 : 3), "#444");
    line(x, 333, x, 333 - (big ? 5 : 3), "#444");
  }
  txt(216, 326, "0°", { size: 12, fill: "#111" });
  for (let i = 1; i <= 15; i++) txt(Math.round(213 + i * 54.95) + 2, 326, (i * 45) + "°", { size: 12, fill: "#111", anchor: "middle" });
  txt(1064, 326, "720°", { size: 12, fill: "#111" });

  // angle read-out
  rect(499, 239, 198, 28, "#ccffcc");
  rect(499, 239, 20, 28, "#e6c8e6");
  rect(563, 239, 22, 28, "#c8c8ff");
  rect(628, 239, 21, 28, "#c8c8c8");
  parts.push('<path d="M502 241h14l-7 7zM509 245v17" fill="#800080" stroke="#800080"/>');
  parts.push('<path d="M567 241h14l-7 7zM574 245v17" fill="#1010f0" stroke="#1010f0"/>');
  parts.push('<path d="M639 247l-7 14h14z" fill="none" stroke="#111"/>');
  txt(520, 260, "-5°", { size: 22, fill: "#800080" });
  txt(585, 260, "863°", { size: 22, fill: "#0000f0" });
  txt(650, 260, "868°", { size: 22, fill: "#000" });

  // value labels
  function note(x, y, w, h, s, shadow) {
    if (shadow) rect(x + 1, y + 1, w, h, "#000", 'stroke="#000"');
    rect(x, y, w, h, "#fff");
    txt(x + 3, y + h / 2 + 4, s, { size: 11, fill: "#ff2020" });
  }
  note(222, 183, 70, 16, "(0°) 5.42 Bar");
  note(136, 345, 68, 16, "(потери 9%)");
  note(402, 436, 50, 17, "0.03 Bar");
  note(355, 453, 74, 17, "(5°) -0.30 Bar");
  note(305, 499, 83, 16, "(-29°) -0.71 Bar", true);
  note(702, 460, 104, 17, "(32°) -0.41 Bar (12°)");
  note(741, 495, 52, 16, "-0.62 Bar");
  note(950, 493, 78, 16, "(56°) -0.59 Bar");

  // markers
  function dot(x, y, fill, st, r = 4) {
    parts.push(`<circle cx="${x}" cy="${y}" r="${r}" fill="${fill}" stroke="${st}"/>`);
  }
  dot(213, 179, "#fff", "none");
  dot(213, 365, "#0a6a0a", "none");
  dot(398, 495, "#f8f800", "#000");
  dot(439, 474, "#f8f800", "#000");
  dot(461, 457, "#fff", "none");
  dot(692, 481, "#f00000", "#000");
  dot(803, 490, "#fff", "none");
  dot(940, 489, "#f8f800", "#000");
  dot(13, 458, "#10e010", "none");
  parts.push('<path d="M1271.500 125l4.500-6 4.500 6z" fill="#10e010"/>');
  parts.push('<path d="M1271.500 525l4.500 6 4.500-6z" fill="#10e010"/>');
  parts.push('<path d="M1277 321l4 4-4 4-4-4z" fill="#10d010"/>');

  document.getElementById("scope").innerHTML = `<g transform="translate(-4 -108)">${parts.join("")}</g>`;
</script>
<script src="https://cdn.jsdelivr.net/npm/bootstrap@5.3.0/dist/js/bootstrap.bundle.min.js"></script>
</body>
</html>
